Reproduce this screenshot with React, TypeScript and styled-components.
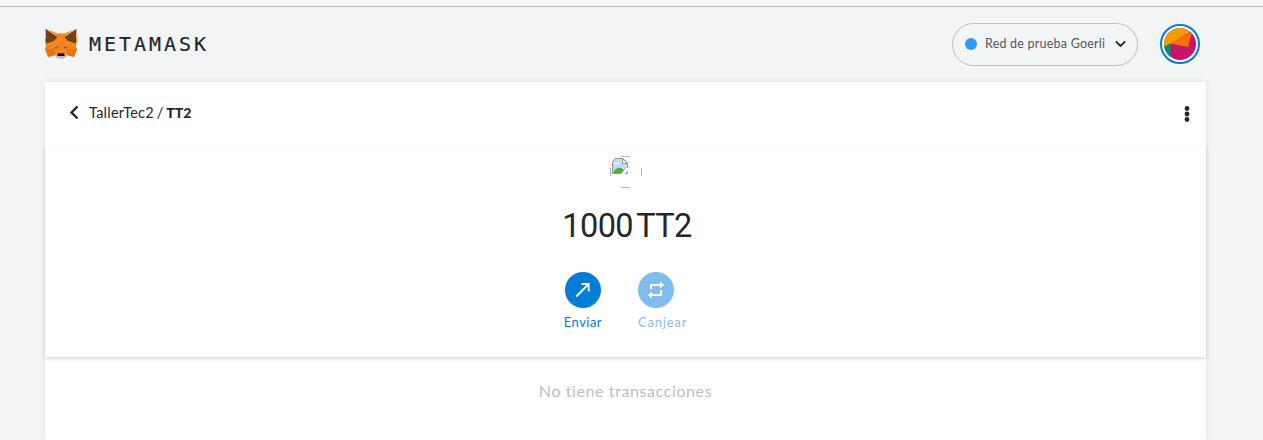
import React from "react";
import styled, { createGlobalStyle } from "styled-components";

const Global = createGlobalStyle`
  * { box-sizing: border-box; }
  body { margin: 0; background: #f2f4f6; color: #24272a; font-family: Lato, "Open Sans", sans-serif; overflow: hidden; }
  button { font: inherit; color: inherit; background: none; border: 0; padding: 0; }
  svg { display: block; flex: none; }
`;

const Page = styled.div`
  height: 440px;
  overflow: hidden;
  display: flex;
  flex-direction: column;
`;
const TopStrip = styled.div`
  height: 7px;
  flex: none;
  background: #f7f7f7;
  border-bottom: 1px solid #b9babb;
`;
const Header = styled.header`
  height: 75px;
  flex: none;
  display: flex;
  align-items: flex-start;
  padding: 16px 63px 0 44px;
`;
const Brand = styled.div`
  display: flex;
  align-items: center;
  height: 42px;
  flex: 1;
  gap: 11px;
`;
const Wordmark = styled.span`
  font: 20px/24px "DejaVu Sans Mono", monospace;
  letter-spacing: 2.96px;
  -webkit-text-stroke: 0.2px currentColor;
`;
const Network = styled.button`
  width: 186px;
  height: 43px;
  border: 1px solid #bbc0c5;
  border-radius: 22px;
  display: flex;
  align-items: center;
  padding: 0 11px 1px 12px;
  margin-right: 22px;
`;
const Dot = styled.span`
  width: 12px;
  height: 12px;
  border-radius: 50%;
  background: #3099f2;
  margin-right: 8px;
`;
const NetworkName = styled.span`
  flex: 1;
  text-align: left;
  font-size: 12.5px;
  line-height: 17px;
  letter-spacing: 0.22px;
  padding-bottom: 1px;
  color: #535a61;
  white-space: nowrap;
`;
const Avatar = styled.div`
  width: 40px;
  height: 40px;
  margin-top: 1px;
  border: 2px solid #037dd6;
  border-radius: 50%;
  background: #fff;
  padding: 2px;
`;
const Card = styled.main`
  width: 1161px;
  flex: 1;
  margin-left: 45px;
  background: #fff;
  box-shadow: 0 0 7px rgba(0, 0, 0, 0.08);
`;
const Nav = styled.nav`
  height: 64px;
  display: flex;
  align-items: center;
  justify-content: space-between;
  padding: 0 16px 0 24px;
`;
const Crumb = styled.div`
  display: flex;
  align-items: center;
  padding-bottom: 3px;
  font-size: 14.5px;
  line-height: 20px;
  letter-spacing: 0.25px;
  word-spacing: -1.2px;
  gap: 10px;
  b { font-weight: 900; font-size: 14px; letter-spacing: 0; }
`;
const Asset = styled.section`
  height: 211px;
  display: flex;
  flex-direction: column;
  align-items: center;
  padding-top: 10px;
  box-shadow: 0 2px 4px rgba(0, 0, 0, 0.14);
`;
const Balance = styled.h1`
  margin: 16px 0 0 3px;
  font: 400 32.5px/45px Roboto, sans-serif;
  letter-spacing: -0.6px;
  word-spacing: -3.6px;
  white-space: nowrap;
`;
const Actions = styled.div`
  display: flex;
  gap: 36px;
  margin-top: 23px;
`;
const Action = styled.button<{ $faded?: boolean }>`
  display: flex;
  flex-direction: column;
  align-items: flex-start;
  color: #037dd6;
  opacity: ${(p) => (p.$faded ? 0.5 : 1)};
  font-size: 13px;
  line-height: 16px;
  letter-spacing: ${(p) => (p.$faded ? "0.8px" : "0.45px")};
`;
const ActionIcon = styled.span<{ $inset: number }>`
  width: 36px;
  height: 36px;
  margin: 0 0 6px ${(p) => p.$inset}px;
  border-radius: 50%;
  background: #037dd6;
  display: flex;
  align-items: center;
  justify-content: center;
`;
const Empty = styled.p`
  margin: 23px 0 0;
  text-align: center;
  font-size: 16px;
  line-height: 22px;
  letter-spacing: 0.6px;
  color: #bbc0c5;
`;

const Fox = () => (
  <svg width="34" height="32" viewBox="0 0 34 32">
    <path fill="#f6851b" d="M2 1l11 8h8L32 1l1 12-1 5 1 3-3 8-7-2-3 3h-6l-3-3-7 2-3-8 1-3-1-5z" />
    <path fill="#f6851b" d="M8 8h18v8H8z" />
    <path fill="#e4761b" d="M1 21h10v6l-7 2zM33 21H23v6l7 2z" />
    <path fill="#e98b3d" d="M9 14h4l2 10h-3zM25 14h-4l-2 10h3z" />
    <path fill="#763d16" d="M1.500 1L13.500 9 10 13 2.500 15.500 1.500 12l.7-3zM32.500 1L20.500 9l3.500 4 7.500 2.500 1-3.500-.7-3z" />
    <path fill="#f6851b" d="M4 1.500L13 5.500h8l9-4L20.500 9h-7z" />
    <path fill="#d66a1b" d="M9 20l4.500-2.500 1 3.500zM25 20l-4.500-2.500-1 3.500z" />
    <path fill="#6c594c" d="M11 19.500l2.500-.6.7 1.300zM23 19.500l-2.500-.6-.7 1.300z" />
    <path fill="#c9b7aa" d="M10.500 27l3.500-1h6l3.500 1-3.500 3.500h-6z" />
    <path fill="#161616" d="M14 25.200h6l.8 2.800h-7.600z" />
  </svg>
);

const Jazzicon = () => (
  <svg width="32" height="32" viewBox="0 0 32 32">
    <clipPath id="disc"><circle cx="16" cy="16" r="16" /></clipPath>
    <g clipPath="url(#disc)">
      <path fill="#c8146c" d="M0 0h32v32H0z" />
      <path fill="#f59b00" d="M0 0h32L28 3 6 16 0 20z" />
      <path fill="#f57300" d="M28 4L24 19 6 15.500z" />
      <path fill="#018e77" d="M0 18.500L6.500 15.500V32H0z" />
    </g>
  </svg>
);

const BrokenImage = () => (
  <svg width="32" height="32" viewBox="0 0 32 32">
    <g fill="none" stroke="#b5b5b5">
      <path d="M11 .5h9M11 31.500h9M.5 12v8M31.500 12v8" />
      <path d="M2 8Q4 4 8 2" stroke="#ddd" />
    </g>
    <path d="M2.500 17.500V6L5 2.500h8l4.500 4.500v10.500z" fill="#c3d9f8" stroke="#949494" />
    <path d="M12.500 2.500v5h5z" fill="#fff" stroke="#949494" />
    <path d="M4 8q1-2 3-1 2-2 3 1z" fill="#fff" />
    <path d="M3 17q3-6 8-5l3 2-2 3z" fill="#4fad37" />
    <path d="M10 18.500l9-8v3.500l-5 4.500z" fill="#fff" />
  </svg>
);

export default function App() {
  return (
    <Page>
      <Global />
      <TopStrip />
      <Header>
        <Brand>
          <Fox />
          <Wordmark>METAMASK</Wordmark>
        </Brand>
        <Network>
          <Dot />
          <NetworkName>Red de prueba Goerli</NetworkName>
          <svg width="11" height="8" viewBox="0 0 11 8" fill="none" stroke="#24272a" strokeWidth="1.8">
            <path d="M.8 1.300L5.500 6 10.200 1.300" />
          </svg>
        </Network>
        <Avatar><Jazzicon /></Avatar>
      </Header>
      <Card>
        <Nav>
          <Crumb>
            <svg width="10" height="14" viewBox="0 0 10 14" fill="none" stroke="#24272a" strokeWidth="2.400">
              <path d="M8.500 .5L2.500 6.500l6 6" />
            </svg>
            <span>TallerTec2 / <b>TT2</b></span>
          </Crumb>
          <svg width="6" height="16" viewBox="0 0 6 16" fill="#24272a">
            <circle cx="3" cy="2.500" r="2.400" />
            <circle cx="3" cy="8" r="2.400" />
            <circle cx="3" cy="13.500" r="2.400" />
          </svg>
        </Nav>
        <Asset>
          <BrokenImage />
          <Balance>1000 TT2</Balance>
          <Actions>
            <Action>
              <ActionIcon $inset={1}>
                <svg width="16" height="16" viewBox="0 0 16 16" fill="none" stroke="#fff" strokeWidth="1.800">
                  <path d="M1.200 14.500L13.700 2M6.500 2h7.200v7.200" />
                </svg>
              </ActionIcon>
              Enviar
            </Action>
            <Action $faded>
              <ActionIcon $inset={0}>
                <svg width="18" height="18" viewBox="0 0 18 18" fill="none" stroke="#fff" strokeWidth="2">
                  <path d="M4 8V4H14M14 9v5H4" />
                  <path d="M13 .5L17 4 13 7.500zM5 10.500L1 14 5 17.500z" fill="#fff" stroke="none" />
                </svg>
              </ActionIcon>
              Canjear
            </Action>
          </Actions>
        </Asset>
        <Empty>No tiene transacciones</Empty>
      </Card>
    </Page>
  );
}
